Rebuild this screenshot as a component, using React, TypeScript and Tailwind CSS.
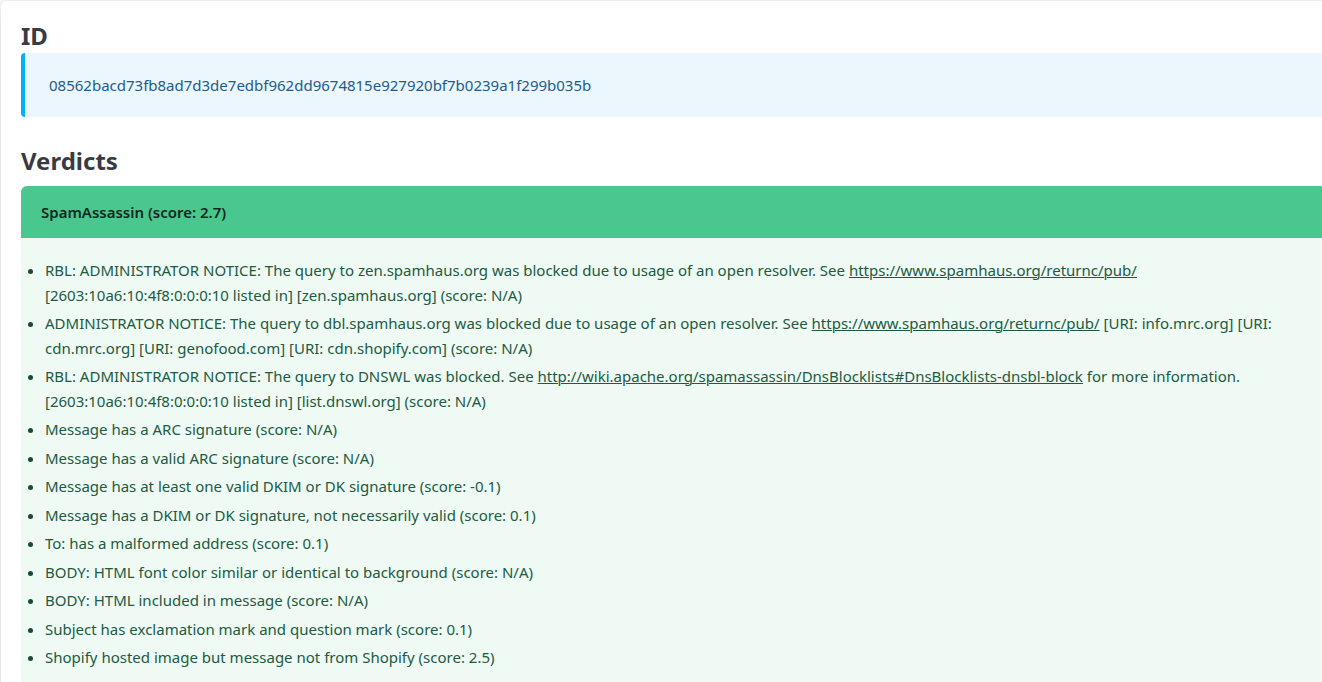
const verdicts: { text: string; link?: string; after?: string }[] = [
  {
    text: "RBL: ADMINISTRATOR NOTICE: The query to zen.spamhaus.org was blocked due to usage of an open resolver. See ",
    link: "https://www.spamhaus.org/returnc/pub/",
    after: " [2603:10a6:10:4f8:0:0:0:10 listed in] [zen.spamhaus.org] (score: N/A)",
  },
  {
    text: "ADMINISTRATOR NOTICE: The query to dbl.spamhaus.org was blocked due to usage of an open resolver. See ",
    link: "https://www.spamhaus.org/returnc/pub/",
    after: " [URI: info.mrc.org] [URI: cdn.mrc.org] [URI: genofood.com] [URI: cdn.shopify.com] (score: N/A)",
  },
  {
    text: "RBL: ADMINISTRATOR NOTICE: The query to DNSWL was blocked. See ",
    link: "http://wiki.apache.org/spamassassin/DnsBlocklists#DnsBlocklists-dnsbl-block",
    after: " for more information. [2603:10a6:10:4f8:0:0:0:10 listed in] [list.dnswl.org] (score: N/A)",
  },
  { text: "Message has a ARC signature (score: N/A)" },
  { text: "Message has a valid ARC signature (score: N/A)" },
  { text: "Message has at least one valid DKIM or DK signature (score: -0.1)" },
  { text: "Message has a DKIM or DK signature, not necessarily valid (score: 0.1)" },
  { text: "To: has a malformed address (score: 0.1)" },
  { text: "BODY: HTML font color similar or identical to background (score: N/A)" },
  { text: "BODY: HTML included in message (score: N/A)" },
  { text: "Subject has exclamation mark and question mark (score: 0.1)" },
  { text: "Shopify hosted image but message not from Shopify (score: 2.5)" },
];

export default function App() {
  return (
    <div
      className="min-h-screen w-full overflow-hidden bg-[#f5f5f5]"
      style={{ fontFamily: "'Noto Sans', 'Open Sans', sans-serif" }}
    >
      <div className="ml-px mt-px w-[1345px] rounded-md bg-white px-5 pt-5 pb-10 shadow-[0_0.5em_1em_-0.125em_rgba(10,10,10,0.1),0_0_0_1px_rgba(10,10,10,0.02)]">
        <h2 className="text-[24px] font-bold leading-[30px] text-[#383a44]">ID</h2>
        <div className="mt-[2px] rounded-[4px] border-l-4 border-[#00b1f5] bg-[#ebf7fd] px-6 py-5 text-[15px] leading-6 text-[#1d5c8c]">
          08562bacd73fb8ad7d3de7edbf962dd9674815e927920bf7b0239a1f299b035b
        </div>

        <h2 className="mt-[29px] text-[24px] font-bold leading-[30px] text-[#383a44]">Verdicts</h2>
        <div className="mt-[10px] overflow-hidden rounded-t-md">
          <div className="flex h-[52px] items-center bg-[#48c78e] px-5 text-[15px] font-semibold text-[#13271d]">
            SpamAssassin (score: 2.7)
          </div>
          <div className="bg-[#effaf5] pt-5 pb-6 pr-6 text-[15px] leading-[24.5px] text-[#205a3f]">
            <ul className="list-disc pl-6 marker:text-[#1b4a35]">
              {verdicts.map((v, i) => (
                <li key={i} className={i > 0 ? "mt-1" : ""}>
                  {v.text}
                  {v.link && (
                    <a href="#" className="underline decoration-1">
                      {v.link}
                    </a>
                  )}
                  {v.after}
                </li>
              ))}
            </ul>
          </div>
        </div>
      </div>
    </div>
  );
}
